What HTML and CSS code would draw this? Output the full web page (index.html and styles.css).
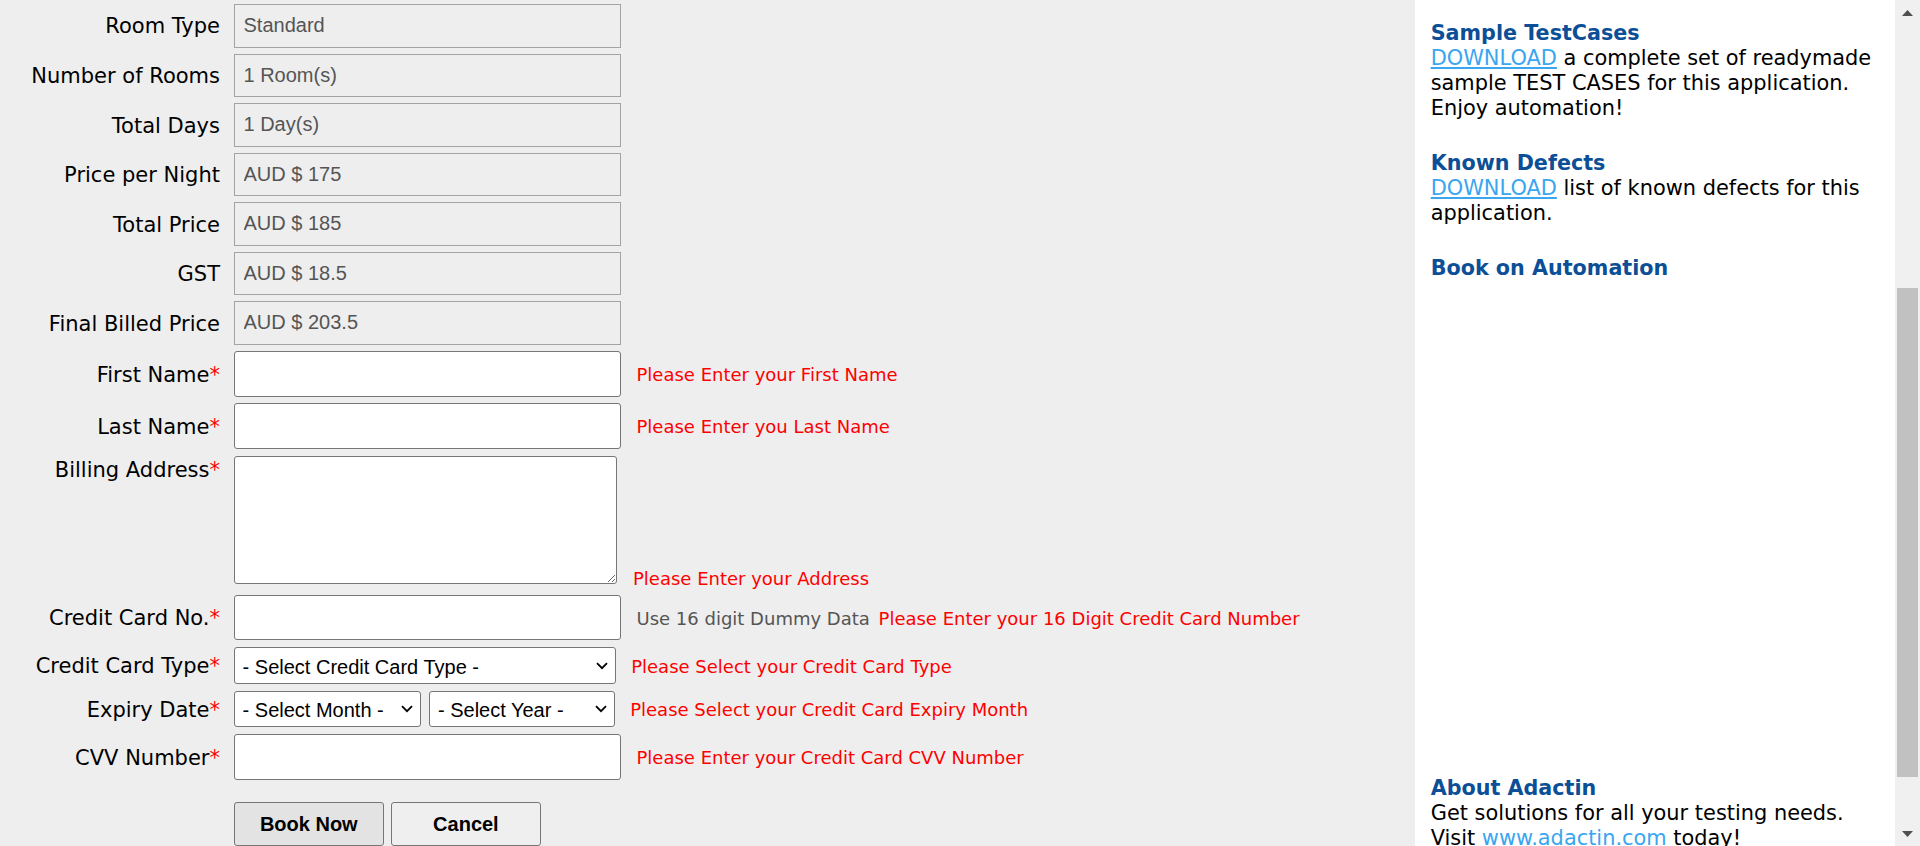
FILE: index.html
```html
<!DOCTYPE html>
<html lang="en">
<head>
<meta charset="utf-8">
<title>Book a Hotel</title>
<link rel="stylesheet" href="styles.css">
</head>
<body>
<div class="page">
  <main class="main">
    <form class="form">
      <div class="row ro first">
        <label class="lbl">Room Type</label>
        <div class="field"><input class="inp readonly" value="Standard" readonly></div>
      </div>
      <div class="row ro">
        <label class="lbl">Number of Rooms</label>
        <div class="field"><input class="inp readonly" value="1 Room(s)" readonly></div>
      </div>
      <div class="row ro">
        <label class="lbl">Total Days</label>
        <div class="field"><input class="inp readonly" value="1 Day(s)" readonly></div>
      </div>
      <div class="row ro">
        <label class="lbl">Price per Night</label>
        <div class="field"><input class="inp readonly" value="AUD $ 175" readonly></div>
      </div>
      <div class="row ro">
        <label class="lbl">Total Price</label>
        <div class="field"><input class="inp readonly" value="AUD $ 185" readonly></div>
      </div>
      <div class="row ro">
        <label class="lbl">GST</label>
        <div class="field"><input class="inp readonly" value="AUD $ 18.5" readonly></div>
      </div>
      <div class="row ro">
        <label class="lbl">Final Billed Price</label>
        <div class="field"><input class="inp readonly" value="AUD $ 203.5" readonly></div>
      </div>

      <div class="row r-first">
        <label class="lbl">First Name<span class="req">*</span></label>
        <div class="field"><input class="inp text-a"><span class="msg">Please Enter your First Name</span></div>
      </div>
      <div class="row r-last">
        <label class="lbl">Last Name<span class="req">*</span></label>
        <div class="field"><input class="inp text-b"><span class="msg">Please Enter you Last Name</span></div>
      </div>
      <div class="row r-addr">
        <label class="lbl lbl-top">Billing Address<span class="req">*</span></label>
        <div class="field field-bottom"><textarea class="inp area"></textarea><span class="msg msg-bottom">Please Enter your Address</span></div>
      </div>
      <div class="row r-cc">
        <label class="lbl">Credit Card No.<span class="req">*</span></label>
        <div class="field"><input class="inp text-c"><span class="msg"><span class="hint">Use 16 digit Dummy Data</span> <span class="msg-second">Please Enter your 16 Digit Credit Card Number</span></span></div>
      </div>
      <div class="row r-type">
        <label class="lbl">Credit Card Type<span class="req">*</span></label>
        <div class="field field-sel">
          <div class="sel sel-type">
            <select class="select"><option>- Select Credit Card Type -</option></select>
            <svg class="chev" width="12" height="8" viewBox="0 0 12 8"><path d="M1 1.2 L6 6.2 L11 1.2" fill="none" stroke="#000" stroke-width="1.8"/></svg>
          </div>
          <span class="msg">Please Select your Credit Card Type</span>
        </div>
      </div>
      <div class="row r-exp">
        <label class="lbl">Expiry Date<span class="req">*</span></label>
        <div class="field field-sel">
          <div class="sel-pair">
            <div class="sel sel-month">
              <select class="select"><option>- Select Month -</option></select>
              <svg class="chev" width="12" height="8" viewBox="0 0 12 8"><path d="M1 1.2 L6 6.2 L11 1.2" fill="none" stroke="#000" stroke-width="1.8"/></svg>
            </div>
            <div class="sel sel-year">
              <select class="select"><option>- Select Year -</option></select>
              <svg class="chev" width="12" height="8" viewBox="0 0 12 8"><path d="M1 1.2 L6 6.2 L11 1.2" fill="none" stroke="#000" stroke-width="1.8"/></svg>
            </div>
          </div>
          <span class="msg">Please Select your Credit Card Expiry Month</span>
        </div>
      </div>
      <div class="row r-cvv">
        <label class="lbl">CVV Number<span class="req">*</span></label>
        <div class="field"><input class="inp text-d"><span class="msg">Please Enter your Credit Card CVV Number</span></div>
      </div>
      <div class="row r-btns">
        <span class="lbl"></span>
        <div class="btns">
          <button type="button" class="btn btn-primary">Book Now</button>
          <button type="button" class="btn">Cancel</button>
        </div>
      </div>
    </form>
  </main>

  <aside class="sidebar">
    <div class="sb-block">
      <div class="sb-h">Sample TestCases</div>
      <p class="sb-p"><a class="sb-link" href="#">DOWNLOAD</a> a complete set of readymade sample TEST CASES for this application. Enjoy automation!</p>
    </div>
    <div class="sb-block">
      <div class="sb-h">Known Defects</div>
      <p class="sb-p"><a class="sb-link" href="#">DOWNLOAD</a> list of known defects for this application.</p>
    </div>
    <div class="sb-block">
      <div class="sb-h">Book on Automation</div>
      <div class="book-space"></div>
    </div>
    <div class="sb-block">
      <div class="sb-h">About Adactin</div>
      <p class="sb-p">Get solutions for all your testing needs. Visit <a class="site-link" href="#">www.adactin.com</a> today!</p>
    </div>
  </aside>

  <div class="scrollbar">
    <div class="sb-btn">
      <svg width="11" height="6" viewBox="0 0 11 6"><polygon points="0,6 5.5,0 11,6" fill="#505050"/></svg>
    </div>
    <div class="sb-track"><div class="sb-thumb"></div></div>
    <div class="sb-btn">
      <svg width="11" height="6" viewBox="0 0 11 6"><polygon points="0,0 5.5,6 11,0" fill="#505050"/></svg>
    </div>
  </div>
</div>
</body>
</html>
```

FILE: styles.css
```css
html, body {
  margin: 0;
  padding: 0;
  height: 846px;
  overflow: hidden;
  background: #eeeeee;
}

.page {
  display: flex;
  height: 846px;
}

.main {
  width: 1415px;
  flex: none;
  background: #eeeeee;
}

.form {
  display: flex;
  flex-direction: column;
  margin: 0;
  padding-top: 4px;
}

.row {
  display: grid;
  grid-template-columns: 220px 1fr;
  column-gap: 14px;
  align-items: center;
}

.ro + .ro { margin-top: 5.95px; }
.r-first { margin-top: 6.4px; }
.r-last { margin-top: 6.5px; }
.r-addr { margin-top: 7.4px; align-items: start; }
.r-cc { margin-top: 11px; }
.r-type { margin-top: 7.4px; }
.r-exp { margin-top: 7.4px; }
.r-cvv { margin-top: 7.4px; }
.r-btns { margin-top: 21.7px; }

.lbl {
  font-family: "DejaVu Sans", Verdana, sans-serif;
  font-size: 21px;
  line-height: 25px;
  padding-top: 2.4px;
  color: #000;
  text-align: right;
  white-space: nowrap;
}

.lbl-top { padding-top: 1.2px; }

.req { color: #ff0000; }

.field {
  display: flex;
  align-items: center;
  gap: 16px;
}

.field-bottom { align-items: flex-end; }
.field-sel { gap: 15.2px; }

.inp {
  box-sizing: border-box;
  width: 386.5px;
  margin: 0;
  padding: 0 0 0 8.5px;
  font-family: "Liberation Sans", Arial, sans-serif;
  font-size: 20px;
  color: #000;
  background: #ffffff;
  border: 1px solid #767676;
  border-radius: 3px;
  outline: none;
}

.readonly {
  height: 43.6px;
  background: #eeeeee;
  border-color: #a3a3a3;
  border-radius: 0;
  color: #555555;
}

.text-a { height: 45.5px; }
.text-b { height: 45.8px; }
.text-c { height: 45px; }
.text-d { height: 45.6px; }

.area {
  width: 383px;
  height: 127.6px;
  resize: both;
  display: block;
}

.msg {
  font-family: "DejaVu Sans", Verdana, sans-serif;
  font-size: 18px;
  line-height: 22px;
  padding-top: 2.4px;
  color: #ff0000;
  white-space: nowrap;
}

.msg-bottom {
  line-height: 18px;
  padding-top: 0;
  margin-bottom: -3.6px;
}

.hint { color: #555555; }
.msg-second { margin-left: 3px; }

.sel {
  position: relative;
}

.sel-pair {
  display: flex;
  gap: 8.4px;
}

.select {
  box-sizing: border-box;
  width: 100%;
  margin: 0;
  padding: 2px 0 0 7.6px;
  -webkit-appearance: none;
  appearance: none;
  font-family: "Liberation Sans", Arial, sans-serif;
  font-size: 20px;
  color: #000;
  background: #ffffff;
  border: 1px solid #767676;
  border-radius: 3px;
  outline: none;
}

.sel-type { width: 382px; }
.sel-type .select { height: 36.6px; }
.sel-month { width: 187px; }
.sel-year { width: 185.6px; }
.sel-month .select, .sel-year .select { height: 35.6px; }

.chev {
  position: absolute;
  right: 8px;
  top: 50%;
  margin-top: -4px;
  pointer-events: none;
}

.btns {
  display: flex;
  gap: 7.5px;
}

.btn {
  box-sizing: border-box;
  width: 149.6px;
  height: 44px;
  margin: 0;
  padding: 2px 0 0 0;
  font-family: "Liberation Sans", Arial, sans-serif;
  font-weight: bold;
  font-size: 20px;
  color: #000;
  background: #efefef;
  border: 1px solid #767676;
  border-radius: 3px;
}

.btn-primary { background: #e3e3e3; }

.sidebar {
  width: 480px;
  flex: none;
  box-sizing: border-box;
  padding: 21.2px 0 0 15.7px;
  background: #ffffff;
  font-family: "DejaVu Sans", Verdana, sans-serif;
  font-size: 20.9px;
  line-height: 25px;
  color: #000;
}

.sb-block {
  width: 455px;
  margin-bottom: 30px;
}

.sb-h {
  font-weight: bold;
  font-size: 20.7px;
  line-height: 25px;
  color: #0c4f97;
}

.sb-p {
  margin: 0;
}

.sb-link {
  color: #3aa6f0;
  text-decoration: underline;
}

.site-link {
  color: #3aa6f0;
  text-decoration: none;
}

.book-space { height: 464.4px; }

.scrollbar {
  width: 25px;
  flex: none;
  background: #f0f0f0;
  display: flex;
  flex-direction: column;
}

.sb-btn {
  height: 25px;
  flex: none;
  display: flex;
  align-items: center;
  justify-content: center;
}

.sb-track { flex: 1; }

.sb-thumb {
  margin: 263px 2px 0 2px;
  height: 489px;
  background: #c1c1c1;
}
```
